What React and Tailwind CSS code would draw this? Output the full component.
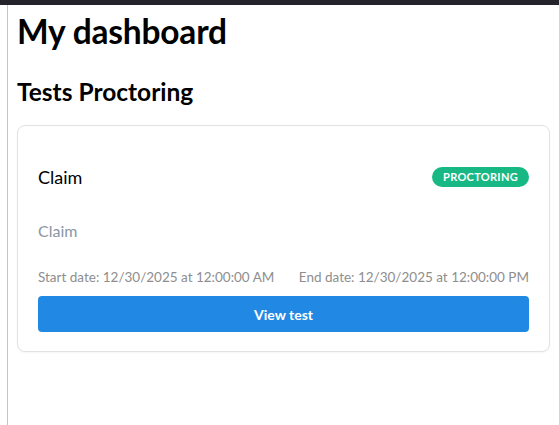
export default function App() {
  return (
    <div className="min-h-[425px] bg-white font-['Lato',sans-serif] text-black">
      <div className="h-[5px] bg-[#24232b]" />
      <div className="flex">
        <div className="w-[8px] shrink-0 border-r border-[#c4c4c4] min-h-[420px]" />
        <main className="flex-1 pl-[9px] pr-[9px]">
          <h1 className="mt-[6px] text-[33.5px] font-bold leading-[40px] tracking-[-0.2px]">My dashboard</h1>
          <h2 className="mt-[25px] text-[24.5px] font-bold leading-[32px]">Tests Proctoring</h2>

          <div className="mt-[17px] rounded-lg border border-[#e2e2e2] bg-white px-[20px] pt-[39px] pb-[19px] shadow-[0_1px_2px_rgba(0,0,0,0.04)]">
            <div className="flex h-[24px] items-center justify-between">
              <span className="text-[18px] leading-[24px]">Claim</span>
              <span className="rounded-full bg-[#18b884] px-[11px] py-[3px] text-[11px] font-bold leading-[14px] tracking-[0.3px] text-white">
                PROCTORING
              </span>
            </div>
            <p className="mt-[32px] text-[16px] leading-[20px] text-[#8b96a3]">Claim</p>
            <div className="mt-[27px] flex justify-between text-[13.5px] leading-[18px] text-[#8e8e8e]">
              <span>Start date: 12/30/2025 at 12:00:00 AM</span>
              <span>End date: 12/30/2025 at 12:00:00 PM</span>
            </div>
            <button className="mt-[10px] h-[36px] w-full rounded-[4px] bg-[#2189e3] text-[14px] font-bold text-white">
              View test
            </button>
          </div>
        </main>
      </div>
    </div>
  );
}
